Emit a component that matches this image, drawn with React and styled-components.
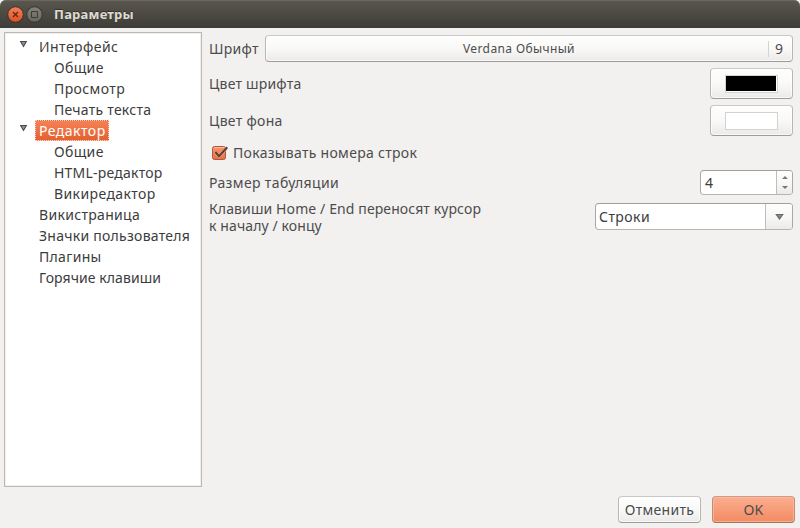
import React from 'react';
import styled, { createGlobalStyle } from 'styled-components';

const GlobalStyle = createGlobalStyle`
  * { box-sizing: border-box; }
  body { margin: 0; background: #f2f1f0; }
`;

const Window = styled.div`
  width: 800px;
  height: 528px;
  display: flex;
  flex-direction: column;
  overflow: hidden;
  background: #f2f1f0;
  color: #4c4c4c;
  font: 14px/18px 'Noto Sans', sans-serif;
`;

const TitleBar = styled.header`
  height: 28px;
  flex: none;
  display: flex;
  align-items: center;
  gap: 2px;
  padding-left: 7px;
  border-radius: 6px 6px 0 0;
  background: linear-gradient(#5a574e, #3d3c37);
  box-shadow: inset 0 1px #6b685f;
`;

const Title = styled.h1`
  margin: 0 0 0 9px;
  padding-bottom: 1px;
  color: #dfdbd2;
  font: bold 13px/20px 'Noto Sans', sans-serif;
  letter-spacing: 0.22px;
  text-shadow: 0 -1px #33322e;
`;

const Main = styled.main`
  height: 459px;
  display: flex;
  gap: 7px;
  padding: 4px 7px 0 4px;
`;

const Tree = styled.nav`
  width: 198px;
  flex: none;
  padding-top: 3px;
  background: #fff;
  border: 1px solid #bfb8b1;
  box-shadow: inset 0 0 0 1px #f0efed;
  color: #3c3c3c;
`;

const TreeRow = styled.div`
  height: 21px;
  display: flex;
  align-items: center;
  padding-left: ${(p) => (p.$child ? 45 : 15)}px;
`;

const Toggle = styled.span`
  width: 15px;
  height: 21px;
  flex: none;
  svg { display: block; }
`;

const TreeLabel = styled.span`
  height: 21px;
  padding: 0 4px;
  line-height: 21px;
  white-space: nowrap;
  letter-spacing: ${(p) => p.$spacing}px;
  ${(p) => p.$selected && `
    width: 74px;
    padding: 0 3px;
    line-height: 19px;
    color: #fff;
    background: linear-gradient(#f58256, #e4602f);
    border: 1px dotted #fbd5c4;
  `}
`;

const Panel = styled.section`
  flex: 1;
  display: flex;
  flex-direction: column;
  padding-top: 3px;
`;

const Row = styled.div`
  height: ${(p) => p.$height}px;
  margin-bottom: ${(p) => p.$gap}px;
  display: flex;
  align-items: center;
  justify-content: space-between;
`;

const Text = styled.span`
  white-space: nowrap;
  letter-spacing: ${(p) => p.$spacing || 0}px;
`;

const MultiLine = styled.div`
  line-height: 17px;
  letter-spacing: 0.11px;
  white-space: nowrap;
`;

const Button = styled.button`
  width: ${(p) => p.$width}px;
  height: ${(p) => p.$height}px;
  display: flex;
  align-items: center;
  justify-content: center;
  padding: 0;
  color: #4c4c4c;
  font: 14px/18px 'Noto Sans', sans-serif;
  border: 1px solid;
  border-color: ${(p) => (p.$primary ? '#c99c88 #bd8d79 #a8735c' : '#cac8c5 #b9b6b3 #9e9b98')};
  border-radius: 4px;
  background: ${(p) => (p.$primary ? 'linear-gradient(#fcae8f, #f28b63)' : 'linear-gradient(#fefefe, #f9f9f8 50%, #ebeae9)')};
  box-shadow: inset 0 0 0 1px ${(p) => (p.$primary ? '#ffbea3aa' : '#ffffffb0')};
`;

const FontName = styled.span`
  flex: 1;
  text-align: center;
  font-size: 12px;
  letter-spacing: 0.38px;
  padding-left: 4px;
`;

const FontSize = styled.span`
  width: 24px;
  height: 16px;
  line-height: 15px;
  padding-left: 6px;
  text-align: left;
  border-left: 1px solid #d6d4d2;
`;

const Swatch = styled.span`
  width: 53px;
  height: 18px;
  border: 1px solid #d4d2d0;
  background: ${(p) => p.$color};
  box-shadow: ${(p) => (p.$color === '#000' ? 'inset -1px -1px #fff' : 'none')};
`;

const CheckLabel = styled.label`
  display: flex;
  align-items: center;
  gap: 4px;
  padding-left: 3px;
  svg { display: block; }
`;

const Field = styled.div`
  width: ${(p) => p.$width}px;
  height: ${(p) => p.$height}px;
  display: flex;
  align-items: stretch;
  overflow: hidden;
  border: 1px solid;
  border-color: #a19e9b #aaa7a4 #b7b4b1;
  border-radius: 4px;
  background: #fff;
  color: #3c3c3c;
`;

const FieldValue = styled.span`
  flex: 1;
  display: flex;
  align-items: center;
  padding-left: ${(p) => p.$pad}px;
  letter-spacing: 0.45px;
`;

const FieldSide = styled.span`
  width: ${(p) => p.$width}px;
  display: flex;
  align-items: center;
  justify-content: center;
  border-left: 1px solid #c1beba;
  background: linear-gradient(#fdfdfd, #f8f8f7 50%, #ebeae9);
`;

const Footer = styled.footer`
  display: flex;
  justify-content: flex-end;
  gap: 11px;
  padding: 9px 5px 0 0;
`;

const items = [
  { label: 'Интерфейс', spacing: 0.45, open: true },
  { label: 'Общие', spacing: 0.35, child: true },
  { label: 'Просмотр', spacing: 0.4, child: true },
  { label: 'Печать текста', spacing: 0.25, child: true },
  { label: 'Редактор', spacing: 0.48, open: true, selected: true },
  { label: 'Общие', spacing: 0.35, child: true },
  { label: 'HTML-редактор', spacing: 0.22, child: true },
  { label: 'Викиредактор', spacing: 0.4, child: true },
  { label: 'Викистраница', spacing: 0.32 },
  { label: 'Значки пользователя', spacing: 0.26 },
  { label: 'Плагины', spacing: 0.32 },
  { label: 'Горячие клавиши', spacing: 0.08 },
];

function WindowButton({ close }) {
  const id = close ? 'close-fill' : 'max-fill';
  return (
    <svg width="17" height="18" viewBox="0 0 17 18">
      <defs>
        <linearGradient id={id} x2="0" y2="1">
          <stop stopColor={close ? '#f4805c' : '#858279'} />
          <stop offset="1" stopColor={close ? '#e05020' : '#66645d'} />
        </linearGradient>
      </defs>
      <circle cx="8.5" cy="9.5" r="7.8" fill={`url(#${id})`} stroke="#34332e" />
      {close
        ? <path d="M6 7l5 5M11 7l-5 5" stroke="#5c2814" strokeWidth="1.3" />
        : <path d="M5.5 6.5h6v6h-6z" fill="none" stroke="#3d3b36" />}
    </svg>
  );
}

function Expander() {
  return (
    <svg width="15" height="21" viewBox="0 0 15 21">
      <path d="M-.3 5h7.6L3.5 11.6z" fill="#4a4a4a" />
      <path d="M1.6 6h3.8L3.5 9.4z" fill="#929292" />
    </svg>
  );
}

function Check() {
  return (
    <svg width="17" height="17" viewBox="0 0 17 17">
      <defs>
        <linearGradient id="check-fill" x2="0" y2="1">
          <stop stopColor="#f9966f" />
          <stop offset="1" stopColor="#ec6e42" />
        </linearGradient>
      </defs>
      <rect x=".5" y="1.5" width="13" height="13" rx="2" fill="url(#check-fill)" stroke="#a65b3e" />
      <path d="M2 2.5h10.5" stroke="#ffb79b" />
      <path d="M3.4 7l3.6 4.2L14.6 3" fill="none" stroke="#f9a98a" strokeWidth="3.2" />
      <path d="M3.4 7l3.6 4.2L15.2 2.2" fill="none" stroke="#5b4037" strokeWidth="2.1" />
    </svg>
  );
}

export default function App() {
  return (
    <>
      <GlobalStyle />
      <Window>
        <TitleBar>
          <WindowButton close />
          <WindowButton />
          <Title>Параметры</Title>
        </TitleBar>
        <Main>
          <Tree>
            {items.map((item, i) => (
              <TreeRow key={i} $child={item.child}>
                {!item.child && <Toggle>{item.open && <Expander />}</Toggle>}
                <TreeLabel $spacing={item.spacing} $selected={item.selected}>{item.label}</TreeLabel>
              </TreeRow>
            ))}
          </Tree>
          <Panel>
            <Row $height={27} $gap={6}>
              <Text $spacing={0.3}>Шрифт</Text>
              <Button $width={528} $height={27}>
                <FontName>Verdana Обычный</FontName>
                <FontSize>9</FontSize>
              </Button>
            </Row>
            <Row $height={31} $gap={6}>
              <Text $spacing={0.2}>Цвет шрифта</Text>
              <Button $width={83} $height={31}><Swatch $color="#000" /></Button>
            </Row>
            <Row $height={31} $gap={8}>
              <Text $spacing={0.3}>Цвет фона</Text>
              <Button $width={83} $height={31}><Swatch $color="#fff" /></Button>
            </Row>
            <Row $height={18} $gap={8}>
              <CheckLabel>
                <Check />
                <Text $spacing={0.3}>Показывать номера строк</Text>
              </CheckLabel>
            </Row>
            <Row $height={25} $gap={8}>
              <Text $spacing={0.36}>Размер табуляции</Text>
              <Field $width={93} $height={25}>
                <FieldValue $pad={4}>4</FieldValue>
                <FieldSide $width={16}>
                  <svg width="6" height="13" viewBox="0 0 6 13">
                    <path d="M0 3h6L3 0zM0 10h6L3 13z" fill="#777" />
                  </svg>
                </FieldSide>
              </Field>
            </Row>
            <Row $height={27} $gap={0}>
              <MultiLine>
                Клавиши Home / End переносят курсор
                <br />
                к началу / концу
              </MultiLine>
              <Field $width={198} $height={27}>
                <FieldValue $pad={3}>Строки</FieldValue>
                <FieldSide $width={27}>
                  <svg width="9" height="6" viewBox="0 0 9 6">
                    <path d="M.2 0h8.6L4.5 6z" fill="#686868" />
                    <path d="M2.4 1h4.2L4.5 4z" fill="#8c8c8c" />
                  </svg>
                </FieldSide>
              </Field>
            </Row>
          </Panel>
        </Main>
        <Footer>
          <Button $width={83} $height={27}><Text $spacing={0.3}>Отменить</Text></Button>
          <Button $width={83} $height={27} $primary><Text $spacing={0.3}>OK</Text></Button>
        </Footer>
      </Window>
    </>
  );
}
